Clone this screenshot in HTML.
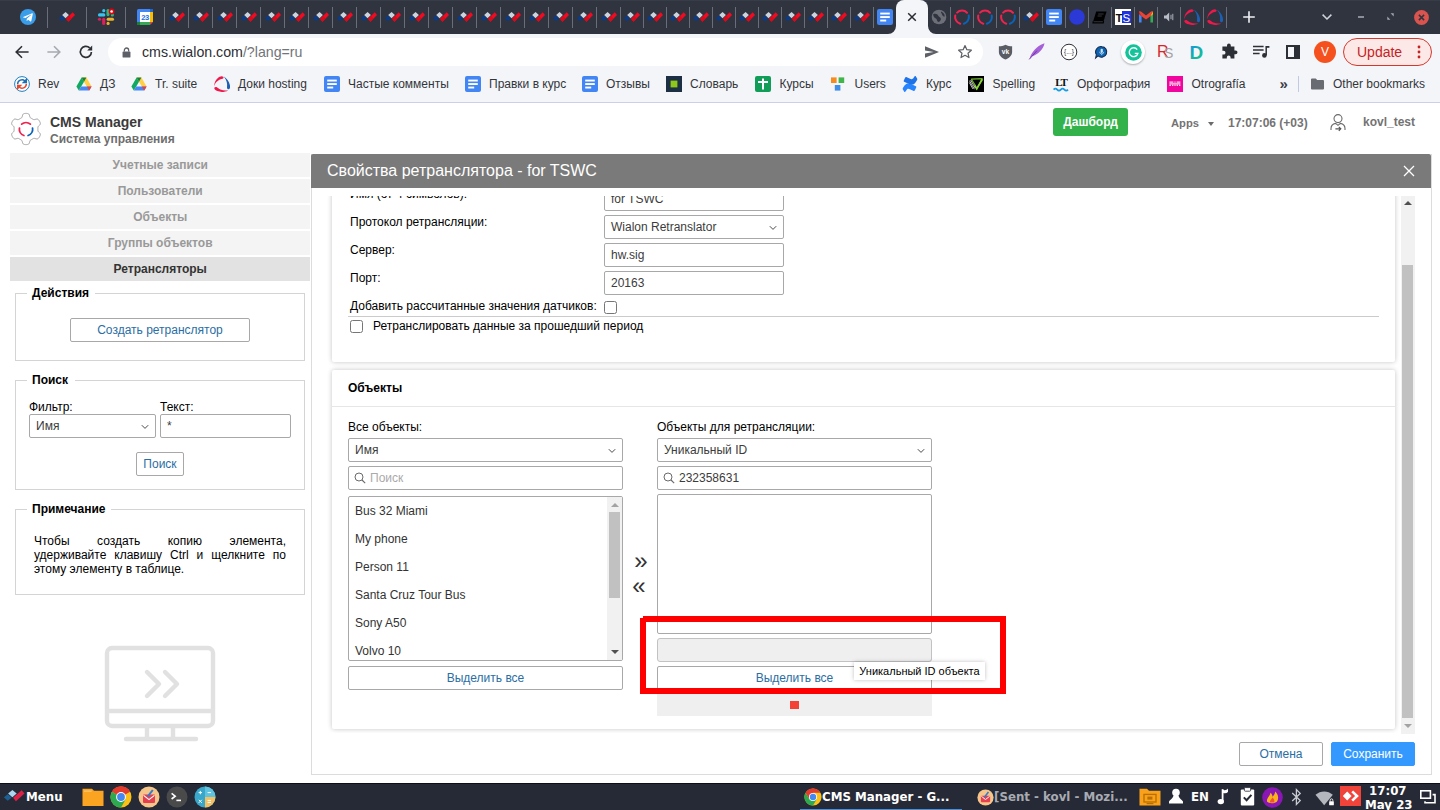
<!DOCTYPE html>
<html lang="ru">
<head>
<meta charset="utf-8">
<title>CMS Manager</title>
<style>
*{box-sizing:border-box;margin:0;padding:0}
html,body{width:1440px;height:810px;overflow:hidden;background:#fff}
body{font-family:"Liberation Sans",Arial,sans-serif;font-size:12px;color:#000;position:relative}
.abs{position:absolute}
#tabbar{position:absolute;left:0;top:0;width:1440px;height:34px;background:#30343f;box-shadow:inset 0 1px 0 #373c49}
#toolbar{position:absolute;left:0;top:34px;width:1440px;height:34px;background:#f4f5f8}
#bookbar{position:absolute;left:0;top:68px;width:1440px;height:34px;background:#f4f5f8}
#chromeline{position:absolute;left:0;top:102px;width:1440px;height:1px;background:#cbd0e8}
.tsep{position:absolute;top:7px;width:1px;height:20.5px;background:#6a6e7b}
.fav{position:absolute;top:9px;width:16px;height:16px;overflow:visible}
#acttab{position:absolute;left:896px;top:0;width:32px;height:34px;background:#f4f5f8;border-radius:8px 8px 0 0}
#omni{position:absolute;left:108px;top:38px;width:875px;height:28px;border-radius:14px;background:#fff}
#omni .url{position:absolute;left:34px;top:4px;font-size:14.2px;line-height:20px;color:#2c2e33;white-space:nowrap}
#omni .url span{color:#72757a}
.bm{position:absolute;top:76px;font-size:12px;line-height:16px;color:#33353c;white-space:nowrap}
.bmi{position:absolute;top:76px;width:16px;height:16px;overflow:visible}
#taskbar{position:absolute;left:0;top:783px;width:1440px;height:27px;background:#262a36;box-shadow:inset 0 1px 0 #0d0f18;overflow:hidden}
#taskbar .t{position:absolute;font-family:"DejaVu Sans",sans-serif;font-weight:bold;color:#fff;font-size:11.8px;line-height:15px;white-space:nowrap}
#page{position:absolute;left:0;top:0;width:1440px;height:810px}
.hb{font-weight:bold;font-size:12px;color:#737373;line-height:16px;white-space:nowrap}
.mi{position:absolute;left:10px;width:300.4px;height:24px;background:#f4f4f4;color:#999;font-weight:bold;font-size:12px;line-height:25px;text-align:center}
.mi.sel{background:#e2e2e2;color:#333}
.fs{position:absolute;left:15px;width:290px;border:1px solid #d4d4d4}
.lg{position:absolute;left:27px;height:16px;background:#fff;font-weight:bold;font-size:12px;line-height:16px;padding-left:5px;white-space:nowrap}
.btn{position:absolute;border:1px solid #a8a8a8;border-radius:2px;background:#fff;color:#2a6ea3;font-size:12px;line-height:22px;text-align:center;white-space:nowrap}
.t12{font-size:12px;line-height:14px;white-space:nowrap;color:#000}
.inp,.sel2{position:absolute;height:24px;border:1px solid #a8a8a8;border-radius:2px;background:#fff;font-size:12px;line-height:22px;padding-left:6px;color:#3c3c3c;white-space:nowrap}
.chev{position:absolute;right:6px;top:9px;width:8px;height:6px}
.mag{position:absolute;left:5px;top:5px;width:12px;height:12px}
.srch{padding-left:21px}
.cb{position:absolute;width:13px;height:13px;border:1px solid #767676;border-radius:2.5px;background:#fff}
.card{position:absolute;background:#fff;box-shadow:0 0 5px rgba(0,0,0,.24);border-radius:2px}
.lst{position:absolute;border:1px solid #a8a8a8;border-radius:2px;background:#fff;overflow:hidden}
.li{position:absolute;left:6px;height:28px;line-height:28px;font-size:12px;color:#333;white-space:nowrap}
</style>
</head>
<body>
<div id="page">
<svg class="abs" style="left:10px;top:112px" width="32" height="34" viewBox="0 0 32 34">
<path d="M27.90 17.00L27.90 16.69L27.89 16.38L27.89 16.06L27.89 15.75L27.91 15.43L27.97 15.10L28.10 14.76L28.35 14.37L28.76 13.94L29.28 13.44L29.79 12.92L30.14 12.40L30.32 11.93L30.36 11.49L30.31 11.07L30.20 10.68L30.06 10.30L29.89 9.92L29.71 9.56L29.51 9.20L29.30 8.85L29.07 8.51L28.83 8.18L28.57 7.87L28.28 7.57L27.95 7.32L27.55 7.13L27.05 7.05L26.43 7.10L25.72 7.28L25.03 7.48L24.45 7.62L23.99 7.64L23.63 7.58L23.31 7.47L23.03 7.33L22.76 7.17L22.49 7.01L22.22 6.85L21.95 6.69L21.68 6.54L21.41 6.39L21.14 6.23L20.86 6.08L20.60 5.90L20.34 5.69L20.11 5.40L19.90 4.99L19.73 4.42L19.56 3.72L19.36 3.02L19.09 2.45L18.77 2.06L18.41 1.81L18.02 1.65L17.62 1.54L17.22 1.48L16.82 1.43L16.41 1.41L16.00 1.40L15.59 1.41L15.18 1.43L14.78 1.48L14.38 1.54L13.98 1.65L13.59 1.81L13.23 2.06L12.91 2.45L12.64 3.02L12.44 3.72L12.27 4.42L12.10 4.99L11.89 5.40L11.66 5.69L11.40 5.90L11.14 6.08L10.86 6.23L10.59 6.39L10.32 6.54L10.05 6.69L9.78 6.85L9.51 7.01L9.24 7.17L8.97 7.33L8.69 7.47L8.37 7.58L8.01 7.64L7.55 7.62L6.97 7.48L6.28 7.28L5.57 7.10L4.95 7.05L4.45 7.13L4.05 7.32L3.72 7.57L3.43 7.87L3.17 8.18L2.93 8.51L2.70 8.85L2.49 9.20L2.29 9.56L2.11 9.92L1.94 10.30L1.80 10.68L1.69 11.07L1.64 11.49L1.68 11.93L1.86 12.40L2.21 12.92L2.72 13.44L3.24 13.94L3.65 14.37L3.90 14.76L4.03 15.10L4.09 15.43L4.11 15.75L4.11 16.06L4.11 16.38L4.10 16.69L4.10 17.00L4.10 17.31L4.11 17.62L4.11 17.94L4.11 18.25L4.09 18.57L4.03 18.90L3.90 19.24L3.65 19.63L3.24 20.06L2.72 20.56L2.21 21.08L1.86 21.60L1.68 22.07L1.64 22.51L1.69 22.93L1.80 23.32L1.94 23.70L2.11 24.08L2.29 24.44L2.49 24.80L2.70 25.15L2.93 25.49L3.17 25.82L3.43 26.13L3.72 26.43L4.05 26.68L4.45 26.87L4.95 26.95L5.57 26.90L6.28 26.72L6.97 26.52L7.55 26.38L8.01 26.36L8.37 26.42L8.69 26.53L8.97 26.67L9.24 26.83L9.51 26.99L9.78 27.15L10.05 27.31L10.32 27.46L10.59 27.61L10.86 27.77L11.14 27.92L11.40 28.10L11.66 28.31L11.89 28.60L12.10 29.01L12.27 29.58L12.44 30.28L12.64 30.98L12.91 31.55L13.23 31.94L13.59 32.19L13.98 32.35L14.38 32.46L14.78 32.52L15.18 32.57L15.59 32.59L16.00 32.60L16.41 32.59L16.82 32.57L17.22 32.52L17.62 32.46L18.02 32.35L18.41 32.19L18.77 31.94L19.09 31.55L19.36 30.98L19.56 30.28L19.73 29.58L19.90 29.01L20.11 28.60L20.34 28.31L20.60 28.10L20.86 27.92L21.14 27.77L21.41 27.61L21.68 27.46L21.95 27.31L22.22 27.15L22.49 26.99L22.76 26.83L23.03 26.67L23.31 26.53L23.63 26.42L23.99 26.36L24.45 26.38L25.03 26.52L25.72 26.72L26.43 26.90L27.05 26.95L27.55 26.87L27.95 26.68L28.28 26.43L28.57 26.13L28.83 25.82L29.07 25.49L29.30 25.15L29.51 24.80L29.71 24.44L29.89 24.08L30.06 23.70L30.20 23.32L30.31 22.93L30.36 22.51L30.32 22.07L30.14 21.60L29.79 21.08L29.28 20.56L28.76 20.06L28.35 19.63L28.10 19.24L27.97 18.90L27.91 18.57L27.89 18.25L27.89 17.94L27.89 17.62L27.90 17.31Z" fill="#fff" stroke="#a0a0a0" stroke-width="1" stroke-linejoin="round"/>
<g fill="none" stroke-width="1.9" stroke-linecap="round" transform="translate(16,17.2) scale(0.95)"><path d="M-4.6 -5.3A7 7 0 0 1 4.6 -5.3" stroke="#f0234f"/><path d="M-6.9 -1.2A7 7 0 0 0 -2.2 6.65" stroke="#f0234f"/><path d="M6.9 -1.2A7 7 0 0 1 2.2 6.65" stroke="#0a63b8"/></g></svg>
<div class="abs" style="left:50px;top:113px;font-size:14px;font-weight:bold;color:#3a3a3a;line-height:18px;white-space:nowrap">CMS Manager</div>
<div class="abs" style="left:50px;top:132px;font-size:12px;font-weight:bold;color:#6e6e6e;line-height:15px;white-space:nowrap">Система управления</div>
<div class="abs" style="left:1053px;top:108px;width:75px;height:28px;border-radius:3px;background:#33b14b;color:#fff;font-weight:bold;font-size:12px;line-height:28px;text-align:center">Дашборд</div>
<div class="abs hb" style="left:1171px;top:114.7px;font-size:11.2px">Apps</div>
<div class="abs" style="left:1207.5px;top:121.7px;width:0;height:0;border:3.5px solid transparent;border-top:4px solid #6b6b6b"></div>
<div class="abs hb" style="left:1228px;top:114.7px">17:07:06 (+03)</div>
<svg class="abs" style="left:1329px;top:113px" width="18" height="20" viewBox="0 0 18 20"><circle cx="9" cy="5.6" r="4" fill="none" stroke="#6a6a6a" stroke-width="1.1"/><path d="M2 17V15.6C2 12.6 4.6 10.8 6.6 10.4L9 12.4 11.4 10.4C13.6 10.8 16 12.6 16 15.6V17" fill="none" stroke="#6a6a6a" stroke-width="1.1"/><path d="M6.4 15.8H11.6M9.8 13.8 11.8 15.8 9.8 17.8" fill="none" stroke="#555" stroke-width="1.2"/></svg>
<div class="abs hb" style="left:1363px;top:113.5px">kovl_test</div>
<div class="mi" style="top:153px">Учетные записи</div>
<div class="mi" style="top:179px">Пользователи</div>
<div class="mi" style="top:205px">Объекты</div>
<div class="mi" style="top:231px">Группы объектов</div>
<div class="mi sel" style="top:257px">Ретрансляторы</div>
<div class="fs" style="top:293px;height:68px"></div>
<div class="lg" style="top:285px;width:68px">Действия</div>
<div class="btn" style="left:70px;top:318px;width:180px;height:24px">Создать ретранслятор</div>
<div class="fs" style="top:380px;height:110px"></div>
<div class="lg" style="top:372px;width:48px">Поиск</div>
<div class="abs t12" style="left:29px;top:400px">Фильтр:</div>
<div class="abs t12" style="left:160px;top:400px">Текст:</div>
<div class="sel2" style="left:29px;top:414px;width:127px">Имя<svg class="chev" viewBox="0 0 8 6"><path d="M0.8 1.2 4 4.4 7.2 1.2" fill="none" stroke="#4a4a4a" stroke-width="1"/></svg></div>
<div class="inp" style="left:160px;top:414px;width:131px">*</div>
<div class="btn" style="left:136px;top:452px;width:48px;height:24px">Поиск</div>
<div class="fs" style="top:509px;height:86px"></div>
<div class="lg" style="top:501px;width:84px">Примечание</div>
<div class="abs" style="left:34px;top:534px;width:252px;font-size:12px;line-height:14px;text-align:justify;color:#000">Чтобы создать копию элемента, удерживайте клавишу Ctrl и щелкните по этому элементу в таблице.</div>
<svg class="abs" style="left:104px;top:644.5px" width="112" height="98" viewBox="0 0 112 98"><g fill="none" stroke="#e1e1e1" stroke-width="4.4"><rect x="3" y="3" width="106" height="78" rx="5"/><path d="M3 66H109"/><path d="M43 81V92M69 81V92"/><path d="M22 94H92" stroke-linecap="round"/><path d="M43 27 55 39 43 51M61 27 73 39 61 51" stroke-linecap="round" stroke-linejoin="round"/></g></svg>
<div class="abs" style="left:310.5px;top:154px;width:1121px;height:621px;border:1px solid #dcdcdc;border-top:none;background:#fff"></div>
<div class="abs" style="left:311px;top:153.5px;width:1120px;height:34px;background:#7a7a7a;border-radius:2px 2px 0 0"></div>
<div class="abs" style="left:327px;top:161px;font-size:16px;line-height:20px;color:#fff;white-space:nowrap">Свойства ретранслятора - for TSWC</div>
<svg class="abs" style="left:1403px;top:165px" width="12" height="12" viewBox="0 0 12 12"><path d="M1 1 11 11M11 1 1 11" stroke="#fff" stroke-width="1.3" fill="none"/></svg>
<div class="abs" style="left:325px;top:196px;width:1076px;height:537px;overflow:hidden">
<div class="card" style="left:7px;top:-46px;width:1063px;height:212px"></div>
<div class="abs t12" style="left:25px;top:-9px">Имя (от 4 символов):</div>
<div class="inp" style="left:279px;top:-9px;width:180px">for TSWC</div>
<div class="abs t12" style="left:25px;top:19px">Протокол ретрансляции:</div>
<div class="sel2" style="left:279px;top:19px;width:180px">Wialon Retranslator<svg class="chev" viewBox="0 0 8 6"><path d="M0.8 1.2 4 4.4 7.2 1.2" fill="none" stroke="#4a4a4a" stroke-width="1"/></svg></div>
<div class="abs t12" style="left:25px;top:47px">Сервер:</div>
<div class="inp" style="left:279px;top:47px;width:180px">hw.sig</div>
<div class="abs t12" style="left:25px;top:75px">Порт:</div>
<div class="inp" style="left:279px;top:75px;width:180px">20163</div>
<div class="abs t12" style="left:25px;top:103px">Добавить рассчитанные значения датчиков:</div>
<div class="cb" style="left:279px;top:105px"></div>
<div class="abs" style="left:23px;top:119.60000000000002px;width:1031px;height:1px;background:#cbcbcb"></div>
<div class="cb" style="left:25px;top:124px"></div>
<div class="abs t12" style="left:48px;top:123px">Ретранслировать данные за прошедший период</div>
<div class="card" style="left:7px;top:174px;width:1063px;height:359px"></div>
<div class="abs" style="left:23px;top:184px;font-size:12px;font-weight:bold;line-height:16px">Объекты</div>
<div class="abs" style="left:7px;top:210px;width:1063px;height:1px;background:#e6e6e6"></div>
<div class="abs t12" style="left:23px;top:224px">Все объекты:</div>
<div class="abs t12" style="left:332px;top:224px">Объекты для ретрансляции:</div>
<div class="sel2" style="left:23px;top:242px;width:275px">Имя<svg class="chev" viewBox="0 0 8 6"><path d="M0.8 1.2 4 4.4 7.2 1.2" fill="none" stroke="#4a4a4a" stroke-width="1"/></svg></div>
<div class="sel2" style="left:332px;top:242px;width:275px">Уникальный ID<svg class="chev" viewBox="0 0 8 6"><path d="M0.8 1.2 4 4.4 7.2 1.2" fill="none" stroke="#4a4a4a" stroke-width="1"/></svg></div>
<div class="inp srch" style="left:23px;top:270px;width:275px;color:#aaa"><svg class="mag" viewBox="0 0 12 12"><circle cx="5" cy="5" r="4" fill="none" stroke="#6a6a6a" stroke-width="1"/><path d="M8 8 11.2 11.2" stroke="#6a6a6a" stroke-width="1.1"/></svg>Поиск</div>
<div class="inp srch" style="left:332px;top:270px;width:275px"><svg class="mag" viewBox="0 0 12 12"><circle cx="5" cy="5" r="4" fill="none" stroke="#6a6a6a" stroke-width="1"/><path d="M8 8 11.2 11.2" stroke="#6a6a6a" stroke-width="1.1"/></svg>232358631</div>
<div class="lst" style="left:23px;top:300px;width:275px;height:165px">
<div class="li" style="top:0px">Bus 32 Miami</div>
<div class="li" style="top:28px">My phone</div>
<div class="li" style="top:56px">Person 11</div>
<div class="li" style="top:84px">Santa Cruz Tour Bus</div>
<div class="li" style="top:112px">Sony A50</div>
<div class="li" style="top:140px">Volvo 10</div>
<div class="abs" style="right:0;top:0;width:15px;height:163px;background:#f1f1f1"></div>
<div class="abs" style="right:2px;top:15px;width:11px;height:86px;background:#c1c1c1"></div>
<div class="abs" style="right:3.5px;top:5.5px;width:0;height:0;border:4px solid transparent;border-top:none;border-bottom:4px solid #a3a3a3"></div>
<div class="abs" style="right:3.5px;top:153px;width:0;height:0;border:4px solid transparent;border-bottom:none;border-top:4px solid #505050"></div>
</div>
<div class="abs" style="left:309.29999999999995px;top:352px;font-size:24px;line-height:26px;color:#333">»</div>
<div class="abs" style="left:307.29999999999995px;top:376.5px;font-size:24px;line-height:26px;color:#333">«</div>
<div class="lst" style="left:332px;top:298px;width:275px;height:140px"></div>
<div class="abs" style="left:332px;top:442px;width:275px;height:24px;border:1px solid #c2c2c2;border-radius:3px;background:#efefef"></div>
<div class="btn" style="left:23px;top:470px;width:275px;height:24px">Выделить все</div>
<div class="btn" style="left:332px;top:470px;width:275px;height:24px">Выделить все</div>
<div class="abs" style="left:332px;top:498px;width:275px;height:22px;background:#efefef"></div>
<div class="abs" style="left:465px;top:505px;width:8.8px;height:8.2px;background:#f34235"></div>
<div class="abs" style="left:315.4px;top:422.4px;width:365.6px;height:75.2px;border:6px solid #fe0000;border-top:none"></div>
<div class="abs" style="left:318px;top:420px;width:363px;height:6px;background:#fe0000"></div>
<div class="abs" style="left:529px;top:466px;width:131px;height:18px;background:#fff;box-shadow:0 0 4px rgba(0,0,0,.25);font-size:11px;line-height:18px;text-align:center;white-space:nowrap">Уникальный ID объекта</div>
</div>
<div class="abs" style="left:1401px;top:196px;width:14px;height:538px;background:#f1f1f1"></div>
<div class="abs" style="left:1402px;top:265px;width:11px;height:453px;background:#c1c1c1"></div>
<div class="abs" style="left:1404px;top:201px;width:0;height:0;border:4px solid transparent;border-top:none;border-bottom:4px solid #505050"></div>
<div class="abs" style="left:1404px;top:724px;width:0;height:0;border:4px solid transparent;border-bottom:none;border-top:4px solid #a3a3a3"></div>
<div class="btn" style="left:1239px;top:742px;width:84px;height:24px">Отмена</div>
<div class="btn" style="left:1331px;top:742px;width:84px;height:24px;background:#3399ff;border-color:#3399ff;color:#fff">Сохранить</div>
</div>
<div id="taskbar">
<svg class="abs" style="left:4px;top:7px" width="20.5" height="11.6" viewBox="0 0 16 10" preserveAspectRatio="none"><polygon points="-0.1,6.4 2.95,3.6 6,6.4 2.95,9.3" fill="#1d5f92"/><polygon points="3.2,3.1 6.55,0 9.9,3.1 6.55,6.2" fill="#acd5ef"/><polygon points="7.1,6.7 13.8,0.3 16,3.1 9.3,9.8" fill="#dc2147"/></svg>
<div class="t" style="left:26px;top:7px">Menu</div>
<svg class="abs" style="left:82px;top:4.5px" width="22" height="19" viewBox="0 0 22 19"><path d="M0.5 0.8H10L12 2.8H21.5V18H0.5Z" fill="#fba421"/><path d="M2 2.6H9.6V3.6H2Z" fill="#ffd08a"/></svg>
<svg class="abs" style="left:110px;top:3px" width="22" height="22" viewBox="0 0 22 22"><circle cx="11" cy="11" r="10.5" fill="#fbc116"/><path d="M11 11 1.9 5.75A10.5 10.5 0 0 1 20.1 5.75Z" fill="#e33b2e"/><path d="M11 11 1.9 5.75A10.5 10.5 0 0 0 11 21.5L15.5 13.6Z" fill="#2da94f"/><path d="M1.9 5.75A10.5 10.5 0 0 1 20.1 5.75H11Z" fill="#e33b2e"/><circle cx="11" cy="11" r="4.9" fill="#fff"/><circle cx="11" cy="11" r="3.9" fill="#4688f1"/></svg>
<svg class="abs" style="left:138px;top:3px" width="22" height="22" viewBox="0 0 22 22"><circle cx="11" cy="11" r="10.5" fill="#f5c58a"/><rect x="5" y="8.6" width="12" height="8.4" rx="1" fill="#e5404f"/><path d="M5.6 9.4 11 13.6 16.4 9.4" stroke="#fff" stroke-width="1.2" fill="none"/><path d="M9.6 10.6 14.8 4" stroke="#2f7dd1" stroke-width="2"/></svg>
<svg class="abs" style="left:166px;top:3px" width="22" height="22" viewBox="0 0 22 22"><circle cx="11" cy="11" r="10.5" fill="#4a4a4a"/><path d="M5.6 7.4 9.2 10.2 5.6 13" stroke="#fff" stroke-width="1.6" fill="none"/><path d="M10.4 14.4H15" stroke="#fff" stroke-width="1.6"/></svg>
<svg class="abs" style="left:194px;top:3px" width="22" height="22" viewBox="0 0 22 22"><circle cx="11" cy="11" r="10.5" fill="#38a7c9"/><path d="M11 11H21.5A10.5 10.5 0 0 1 11 21.5Z" fill="#f3c063"/><path d="M11 0.5A10.5 10.5 0 0 1 21.5 11H11Z" fill="#5fc3e0"/><path d="M4.6 6.6H8M6.3 4.9V8.3M13.6 6.6H17M4.8 13.8 7.8 16.8M7.8 13.8 4.8 16.8M13.6 14.4H17M13.6 16.4H17" stroke="#fff" stroke-width="1" fill="none"/></svg>
<svg class="abs" style="left:804px;top:5px" width="18" height="18" viewBox="0 0 22 22"><circle cx="11" cy="11" r="10.5" fill="#fbc116"/><path d="M1.9 5.75A10.5 10.5 0 0 1 20.1 5.75H11L6.5 13.6Z" fill="#e33b2e"/><path d="M1.9 5.75A10.5 10.5 0 0 0 11 21.5L15.5 13.6H6.5Z" fill="#2da94f"/><circle cx="11" cy="11" r="4.9" fill="#fff"/><circle cx="11" cy="11" r="3.9" fill="#4688f1"/></svg>
<div class="t" style="left:822px;top:7px">CMS Manager - G...</div>
<div class="abs" style="left:800px;top:26px;width:162px;height:2px;background:#4a90d9"></div>
<svg class="abs" style="left:977px;top:6px" width="17" height="17" viewBox="0 0 22 22"><circle cx="11" cy="11" r="10.5" fill="#f5c58a"/><rect x="5" y="8.6" width="12" height="8.4" rx="1" fill="#e5404f"/><path d="M5.6 9.4 11 13.6 16.4 9.4" stroke="#fff" stroke-width="1.2" fill="none"/><path d="M9.6 10.6 14.8 4" stroke="#2f7dd1" stroke-width="2"/></svg>
<div class="t" style="left:994px;top:7px;color:#a9abb2">[Sent - kovl - Mozi...</div>
<svg class="abs" style="left:1139px;top:5px" width="22" height="18" viewBox="0 0 22 18"><path d="M0.5 0.8H8L10 2.8H21.5V17.5H0.5Z" fill="#f9a11b"/><rect x="5" y="6.4" width="12" height="7.6" fill="none" stroke="#b86f00" stroke-width="1.3"/><rect x="8.4" y="8.6" width="5" height="3" fill="#b86f00"/><path d="M7.6 15.6H14.4" stroke="#b86f00" stroke-width="1.2"/></svg>
<svg class="abs" style="left:1168px;top:5px" width="16" height="17" viewBox="0 0 16 17"><circle cx="8" cy="4.6" r="3.8" fill="#fff"/><path d="M5.4 7.6H10.6C10.8 10.4 13.6 11.6 15 13.6V15.6H1V13.6C2.4 11.6 5.2 10.4 5.4 7.6Z" fill="#fff"/></svg>
<div class="t" style="left:1191px;top:7px">EN</div>
<svg class="abs" style="left:1217px;top:5px" width="12" height="18" viewBox="0 0 12 18"><path d="M5.6 1.2V13" stroke="#fff" stroke-width="1.8"/><path d="M5.6 1.2C7 3 9.6 2.2 11 0.6V4C9.4 5.6 7 5.6 5.6 4.4Z" fill="#fff"/><ellipse cx="3.8" cy="13.6" rx="3.2" ry="2.6" fill="#fff"/></svg>
<svg class="abs" style="left:1240px;top:4px" width="15" height="19" viewBox="0 0 15 19"><rect x="0.8" y="2.4" width="13.4" height="16" rx="1" fill="#fff"/><rect x="4.4" y="0.6" width="6.2" height="3.6" rx="0.8" fill="#fff" stroke="#262a36" stroke-width="0.8"/><path d="M3.8 10.4 6.6 13.2 11.4 7.8" stroke="#262a36" stroke-width="2" fill="none"/></svg>
<svg class="abs" style="left:1261.5px;top:3.5px" width="21" height="21" viewBox="0 0 21 21"><circle cx="10.5" cy="10.5" r="10.3" fill="#8a17b5"/><path d="M5 14.6C4.6 10.6 8 9.4 8.4 5.8 10 7 10.6 8.6 10.4 9.8 12 8.4 13.2 6.6 13 4.6 16 7 17.2 11 15 14.4 13 16.6 7.2 17 5 14.6Z" fill="#f9b41c"/><path d="M8 15.4C7.6 13 9.8 12.4 10.4 10.4 12.2 12 13 13.8 12 15.6Z" fill="#f2562f"/></svg>
<svg class="abs" style="left:1291px;top:5px" width="11" height="18" viewBox="0 0 11 18"><path d="M1.2 5 9.2 12.6 5.4 16.4V1.6L9.2 5.4 1.2 13" stroke="#c9ccd3" stroke-width="1.3" fill="none"/></svg>
<svg class="abs" style="left:1315px;top:8px" width="20" height="15" viewBox="0 0 24 18"><path d="M0.6 4.6C6.6 -0.8 15.4 -0.8 21.4 4.6L11 17Z" fill="#b4b7be"/><path d="M13 17 21.4 7 21.4 17Z" fill="#262a36"/><rect x="17" y="12.4" width="5.6" height="4.6" rx="0.6" fill="#fff"/><path d="M18.2 12.4V11A1.6 1.6 0 0 1 21.4 11V12.4" stroke="#fff" stroke-width="1" fill="none"/></svg>
<div class="abs" style="left:1340px;top:3px;width:20.5px;height:19.5px;background:#f0433a"></div>
<svg class="abs" style="left:1342px;top:7px" width="18" height="12" viewBox="0 0 18 12"><polygon points="0.8,6 5.2,1.6 9.6,6 5.2,10.4" fill="#fff"/><path d="M10.2 1.4 15 6 10.2 10.6" stroke="#fff" stroke-width="2.6" fill="none"/></svg>
<div class="t" style="left:1369px;top:1px">17:07</div>
<div class="t" style="left:1365px;top:15px">May 23</div>
<svg class="abs" style="left:1420px;top:7px" width="16" height="14" viewBox="0 0 16 14"><rect x="0.8" y="0.8" width="9.6" height="7.4" fill="none" stroke="#fff" stroke-width="1.6"/><path d="M5 11.2V12.8H15V4.6H12.6" fill="none" stroke="#fff" stroke-width="1.6"/></svg>
</div>
<svg width="0" height="0" style="position:absolute"><defs>
<symbol id="wl" viewBox="0 0 16 16"><polygon points="-0.1,9.4 2.95,6.6 6,9.4 2.95,12.3" fill="#0b3b85"/><polygon points="3.2,6.1 6.55,3 9.9,6.1 6.55,9.2" fill="#cbd3de"/><polygon points="7.1,9.7 13.8,3.3 16,6.1 9.3,12.8" fill="#f40a20"/><polygon points="7.1,9.7 10.2,6.7 12.5,9.6 9.3,12.8" fill="#d90a1c"/></symbol>
<symbol id="docs" viewBox="0 0 16 16"><rect width="16" height="16" rx="2" fill="#4285f4"/><rect x="3.2" y="3.6" width="9.6" height="1.9" fill="#fff"/><rect x="3.2" y="7.1" width="9.6" height="1.9" fill="#fff"/><rect x="3.2" y="10.6" width="6" height="1.9" fill="#fff"/></symbol>
<symbol id="ring" viewBox="0 0 16 16"><g fill="none" stroke-width="2" stroke-linecap="round"><path d="M3.1 3.6A7 7 0 0 1 13 3.7" stroke="#f0234f"/><path d="M1.3 6.4A7 7 0 0 0 6.2 14.7" stroke="#f0234f"/><path d="M14.7 6.5A7 7 0 0 1 9.9 14.7" stroke="#0a63b8"/></g></symbol>
<symbol id="swirl" viewBox="0 0 16 16"><path d="M9.4 1.2C8.6 -0.4 5.6 0.2 3.4 2.4C1.2 4.6 0.1 7.4 0.3 9.9C1.2 7 2.4 5.6 4.3 4.4C5.8 3.4 7.4 2.9 8.6 2.7C9.6 2.5 9.9 1.9 9.4 1.2Z" fill="#f0174b"/><path d="M0.5 11.6C-0.2 12.6 1.2 14.2 3.4 15.1C6.8 16.4 11 16 14.2 14.4C11.2 14.8 8.6 14.4 6.4 13.5C4.8 12.8 3.8 11.9 2.9 11.3C1.9 10.7 1 10.9 0.5 11.6Z" fill="#f0174b"/><path d="M14.6 13.2C16 13.2 16.4 11.4 15.8 8.8C15 5.4 12.8 2 9.5 0.2C11.6 2.6 12.6 4.8 13 7.4C13.2 9 13 10.2 13 11.4C13 12.4 13.6 13.2 14.6 13.2Z" fill="#1c5fb4"/></symbol>
<symbol id="drive" viewBox="0 0 16 16"><polygon points="5.6,1.6 10.4,1.6 15.6,10.6 10.8,10.6" fill="#ffcf48"/><polygon points="5.6,1.6 8,5.8 2.8,14.6 0.4,10.6" fill="#11a861"/><polygon points="5.2,10.6 15.6,10.6 13.2,14.6 2.8,14.6" fill="#4688f4"/><polygon points="10.8,10.6 15.6,10.6 13.2,14.6" fill="#e94235"/><polygon points="5.6,1.6 10.4,1.6 8,5.8" fill="#188038"/></symbol>
</defs></svg>
<div id="tabbar">
<i class="tsep" style="left:47.0px"></i>
<i class="tsep" style="left:86.0px"></i>
<i class="tsep" style="left:125.0px"></i>
<i class="tsep" style="left:164.0px"></i>
<i class="tsep" style="left:188.0px"></i>
<i class="tsep" style="left:212.0px"></i>
<i class="tsep" style="left:236.0px"></i>
<i class="tsep" style="left:260.0px"></i>
<i class="tsep" style="left:284.0px"></i>
<i class="tsep" style="left:308.0px"></i>
<i class="tsep" style="left:332.0px"></i>
<i class="tsep" style="left:356.0px"></i>
<i class="tsep" style="left:380.0px"></i>
<i class="tsep" style="left:404.0px"></i>
<i class="tsep" style="left:428.0px"></i>
<i class="tsep" style="left:452.0px"></i>
<i class="tsep" style="left:476.0px"></i>
<i class="tsep" style="left:500.0px"></i>
<i class="tsep" style="left:524.0px"></i>
<i class="tsep" style="left:548.0px"></i>
<i class="tsep" style="left:572.0px"></i>
<i class="tsep" style="left:596.0px"></i>
<i class="tsep" style="left:620.0px"></i>
<i class="tsep" style="left:643.0px"></i>
<i class="tsep" style="left:666.0px"></i>
<i class="tsep" style="left:689.0px"></i>
<i class="tsep" style="left:712.0px"></i>
<i class="tsep" style="left:735.0px"></i>
<i class="tsep" style="left:758.0px"></i>
<i class="tsep" style="left:781.0px"></i>
<i class="tsep" style="left:804.0px"></i>
<i class="tsep" style="left:827.0px"></i>
<i class="tsep" style="left:850.0px"></i>
<i class="tsep" style="left:873.0px"></i>
<i class="tsep" style="left:950.0px"></i>
<i class="tsep" style="left:973.0px"></i>
<i class="tsep" style="left:996.0px"></i>
<i class="tsep" style="left:1019.0px"></i>
<i class="tsep" style="left:1042.0px"></i>
<i class="tsep" style="left:1065.0px"></i>
<i class="tsep" style="left:1088.0px"></i>
<i class="tsep" style="left:1111.0px"></i>
<i class="tsep" style="left:1134.0px"></i>
<i class="tsep" style="left:1157.0px"></i>
<i class="tsep" style="left:1180.0px"></i>
<i class="tsep" style="left:1203.0px"></i>
<i class="tsep" style="left:1226.0px"></i>
<svg class="fav" style="left:20px" viewBox="0 0 16 16"><circle cx="8" cy="8" r="8" fill="#3a9dea"/><path d="M3.2 7.9 12.2 4.2c.4-.15.75.1.62.7L11.3 12c-.1.5-.42.6-.84.38L8.2 10.7 7.1 11.8c-.13.13-.23.23-.46.23l.17-2.3 4.2-3.8c.18-.16-.04-.25-.28-.1L5.5 9.1 3.3 8.4c-.5-.15-.5-.48-.1-.5z" fill="#fff"/></svg>
<svg class="fav" style="left:59px"><use href="#wl"/></svg>
<svg class="fav" style="left:98px" viewBox="0 0 16 16"><g stroke-linecap="round" stroke-width="3.1" fill="none">
<path d="M1.5 5.9H5.8" stroke="#36c5f0"/><path d="M5.8 1.6V1.7" stroke="#36c5f0"/>
<path d="M10 1.6V5.6" stroke="#2eb67d"/><path d="M14.3 5.9H14.4" stroke="#2eb67d"/>
<path d="M10.2 10.2H14.5" stroke="#ecb22e"/><path d="M10.1 14.4V14.5" stroke="#ecb22e"/>
<path d="M5.7 10.4V14.5" stroke="#e01e5a"/><path d="M1.5 10.3H1.6" stroke="#e01e5a"/></g>
<circle cx="13.6" cy="2.5" r="2.9" fill="#e8000b"/><circle cx="13.6" cy="2.5" r="1.3" fill="#fff"/></svg>
<svg class="fav" style="left:137px" viewBox="0 0 16 16"><rect x="0" y="0" width="16" height="16" rx="1.5" fill="#4285f4"/><rect x="13" y="0" width="3" height="3" fill="#1967d2"/><rect x="13" y="3" width="3" height="10" fill="#fbbc04"/><rect x="0" y="13" width="13" height="3" fill="#34a853"/><rect x="0" y="13" width="3" height="3" fill="#188038"/><polygon points="13,13 16,13 13,16" fill="#ea4335"/><polygon points="16,13 16,16 13,16" fill="#30343f"/><rect x="3" y="3" width="10" height="10" fill="#fff"/><text x="8" y="11" font-size="7.6" font-weight="bold" fill="#1a73e8" text-anchor="middle" font-family="Liberation Sans,sans-serif" letter-spacing="-0.4">23</text></svg>
<svg class="fav" style="left:168.5px"><use href="#wl"/></svg>
<svg class="fav" style="left:192.5px"><use href="#wl"/></svg>
<svg class="fav" style="left:216.5px"><use href="#wl"/></svg>
<svg class="fav" style="left:240.5px"><use href="#wl"/></svg>
<svg class="fav" style="left:264.5px"><use href="#wl"/></svg>
<svg class="fav" style="left:288.5px"><use href="#wl"/></svg>
<svg class="fav" style="left:312.5px"><use href="#wl"/></svg>
<svg class="fav" style="left:336.5px"><use href="#wl"/></svg>
<svg class="fav" style="left:360.5px"><use href="#wl"/></svg>
<svg class="fav" style="left:384.5px"><use href="#wl"/></svg>
<svg class="fav" style="left:408.5px"><use href="#wl"/></svg>
<svg class="fav" style="left:432.5px"><use href="#wl"/></svg>
<svg class="fav" style="left:456.5px"><use href="#wl"/></svg>
<svg class="fav" style="left:480.5px"><use href="#wl"/></svg>
<svg class="fav" style="left:504.5px"><use href="#wl"/></svg>
<svg class="fav" style="left:528.5px"><use href="#wl"/></svg>
<svg class="fav" style="left:552.5px"><use href="#wl"/></svg>
<svg class="fav" style="left:576.5px"><use href="#wl"/></svg>
<svg class="fav" style="left:600.5px"><use href="#wl"/></svg>
<svg class="fav" style="left:624.0px"><use href="#wl"/></svg>
<svg class="fav" style="left:647.0px"><use href="#wl"/></svg>
<svg class="fav" style="left:670.0px"><use href="#wl"/></svg>
<svg class="fav" style="left:693.0px"><use href="#wl"/></svg>
<svg class="fav" style="left:716.0px"><use href="#wl"/></svg>
<svg class="fav" style="left:739.0px"><use href="#wl"/></svg>
<svg class="fav" style="left:762.0px"><use href="#wl"/></svg>
<svg class="fav" style="left:785.0px"><use href="#wl"/></svg>
<svg class="fav" style="left:808.0px"><use href="#wl"/></svg>
<svg class="fav" style="left:831.0px"><use href="#wl"/></svg>
<svg class="fav" style="left:854.0px"><use href="#wl"/></svg>
<svg class="fav" style="left:877px"><use href="#docs"/></svg>
<div id="acttab"></div>
<svg class="abs" style="left:888px;top:26px" width="8" height="8" viewBox="0 0 8 8"><path d="M0 8H8V0A8 8 0 0 1 0 8Z" fill="#f4f5f8"/></svg>
<svg class="abs" style="left:928px;top:26px" width="8" height="8" viewBox="0 0 8 8"><path d="M8 8H0V0A8 8 0 0 0 8 8Z" fill="#f4f5f8"/></svg>
<svg class="abs" style="left:907px;top:12px" width="10" height="10" viewBox="0 0 10 10"><path d="M1.2 1.2 8.8 8.8M8.8 1.2 1.2 8.8" stroke="#2a2c33" stroke-width="1.5" fill="none"/></svg>
<svg class="fav" style="left:931.0px" viewBox="0 0 16 16"><circle cx="8" cy="8" r="7.3" fill="#6c6f78"/><path d="M2.2 5.2C4.5 4.2 6.6 5 7.3 6.8 7.8 8.2 9.2 8 9.8 9.4 10.3 10.7 9.2 12.4 7.4 13 5.5 12.3 6.3 10.4 5 9.6 3.6 8.8 2 7.4 2.2 5.2ZM10 2.6C12 3.2 13.6 5 13.8 7.4 12.6 7.6 11.4 6.8 11 5.4 10.7 4.4 9.6 3.6 10 2.6Z" fill="#30343f"/></svg>
<svg class="fav" style="left:954.0px"><use href="#ring"/></svg>
<svg class="fav" style="left:977.0px"><use href="#ring"/></svg>
<svg class="fav" style="left:1000.0px"><use href="#ring"/></svg>
<svg class="fav" style="left:1023.0px"><use href="#wl"/></svg>
<svg class="fav" style="left:1046.0px"><use href="#docs"/></svg>
<svg class="fav" style="left:1069.0px" viewBox="0 0 16 16"><circle cx="8" cy="8" r="7.8" fill="#2b39d6"/></svg>
<svg class="fav" style="left:1092.0px" viewBox="0 0 16 16"><path d="M4.2 2.5H14.6L11.6 12.2H1.2Z" fill="#000"/><path d="M1.2 12.2 1 13.9H11.2L11.6 12.2" fill="none" stroke="#000" stroke-width="1.2"/><path d="M6.2 5H11.6M5.6 7H9.8" stroke="#3a3d48" stroke-width="0.9"/></svg>
<svg class="fav" style="left:1115.0px" viewBox="0 0 16 16"><rect width="16" height="16" fill="#fff"/><rect x="7" y="2" width="9" height="12" fill="#1d34e0"/><text x="0.6" y="13" font-size="11.5" font-weight="bold" fill="#111" font-family="Liberation Sans,sans-serif">T</text><text x="7.6" y="13" font-size="11.5" fill="#fff" font-family="Liberation Sans,sans-serif">S</text></svg>
<svg class="fav" style="left:1138.0px" viewBox="0 0 16 16"><path d="M1 4.2V13.4H3.6V7L1 4.2Z" fill="#4285f4"/><path d="M15 4.2V13.4H12.4V7L15 4.2Z" fill="#34a853"/><path d="M12.4 3.6 15 2.6V5.2L12.4 7.3Z" fill="#fbbc04"/><path d="M1 2.6 3.6 3.6V7.3L1 5.2Z" fill="#c5221f"/><path d="M1 2.6C1.8 2 2.8 2.2 3.6 2.9L8 6.4 12.4 2.9C13.2 2.2 14.2 2 15 2.6L12.4 7.3 8 10.4 3.6 7.3Z" fill="#ea4335"/></svg>
<svg class="fav" style="left:1161.0px" viewBox="0 0 16 16"><path d="M3 6.4H5.2L8.2 3.6V12.4L5.2 9.6H3Z" fill="#b9bec8"/><path d="M10 5.8V10.2M11.8 4.8V11.2" stroke="#b9bec8" stroke-width="0.9" fill="none"/></svg>
<svg class="fav" style="left:1184.0px"><use href="#swirl"/></svg>
<svg class="fav" style="left:1207.0px"><use href="#swirl"/></svg>
<svg class="abs" style="left:1242px;top:10px" width="14" height="14" viewBox="0 0 14 14"><path d="M7 1.2V12.8M1.2 7H12.8" stroke="#eef0f4" stroke-width="1.6" fill="none"/></svg>
<svg class="abs" style="left:1321px;top:11px" width="12" height="12" viewBox="0 0 12 12"><path d="M1.6 3.6 6 8 10.4 3.6" stroke="#d0d3da" stroke-width="1.5" fill="none"/></svg>
<div class="abs" style="left:1358px;top:16px;width:6px;height:2px;background:#8b8e98"></div>
<svg class="abs" style="left:1386px;top:12px" width="9" height="9" viewBox="0 0 9 9"><path d="M1.3 4.6V7.7H4.4ZM4.6 1.3H7.7V4.4Z" fill="#a3a6af"/></svg>
<svg class="abs" style="left:1413.5px;top:9.5px" width="15" height="15" viewBox="0 0 15 15"><circle cx="7.5" cy="7.5" r="7.4" fill="#d9534f"/><path d="M4.9 4.9 10.1 10.1M10.1 4.9 4.9 10.1" stroke="#30343f" stroke-width="1.5" fill="none"/></svg>
</div>
<div id="toolbar"></div>
<svg class="abs" style="left:14px;top:44px" width="16" height="16" viewBox="0 0 16 16"><path d="M14.6 8H2.4M8 2.2 2.2 8 8 13.8" stroke="#2d2f36" stroke-width="1.6" fill="none"/></svg>
<svg class="abs" style="left:46px;top:44px" width="16" height="16" viewBox="0 0 16 16"><path d="M1.4 8H13.6M8 2.2 13.8 8 8 13.8" stroke="#a6a9b0" stroke-width="1.6" fill="none"/></svg>
<svg class="abs" style="left:78px;top:44px" width="16" height="16" viewBox="0 0 16 16"><path d="M13.4 7.9A5.5 5.5 0 1 1 11.7 3.9" stroke="#2d2f36" stroke-width="1.7" fill="none"/><path d="M14.2 1.4V6.4H9.2Z" fill="#2d2f36"/></svg>
<div id="omni"><svg class="abs" style="left:13.5px;top:8.5px" width="9" height="11" viewBox="0 0 10 12"><rect x="0.6" y="5" width="8.8" height="6.6" rx="1" fill="#5d6066"/><path d="M2.6 5V3.4A2.4 2.4 0 0 1 7.4 3.4V5" stroke="#5d6066" stroke-width="1.4" fill="none"/></svg><div class="url">cms.wialon.com<span>/?lang=ru</span></div>
<svg class="abs" style="left:816px;top:7px" width="16" height="14" viewBox="0 0 16 14"><path d="M1 1.2 15 7 1 12.8 1 8.4 9.6 7 1 5.6Z" fill="#5d6066"/></svg>
<svg class="abs" style="left:849px;top:6px" width="16" height="15" viewBox="0 0 18 17"><path d="M9 1.8 11.1 6.5 16.2 7 12.4 10.4 13.5 15.4 9 12.8 4.5 15.4 5.6 10.4 1.8 7 6.9 6.5Z" stroke="#5d6066" stroke-width="1.4" fill="none" stroke-linejoin="round"/></svg></div>
<svg class="abs" style="left:998px;top:44px" width="15" height="16" viewBox="0 0 17 18"><path d="M8.5 0.8C6 2.2 3.6 2.6 1 2.6V9C1 13 4.4 16 8.5 17.4 12.6 16 16 13 16 9V2.6C13.4 2.6 11 2.2 8.5 0.8Z" fill="#5a5d64"/><text x="8.5" y="11.2" font-size="7.5" font-weight="bold" fill="#fff" text-anchor="middle" font-family="Liberation Sans,sans-serif">vk</text></svg>
<svg class="abs" style="left:1028px;top:42px" width="18" height="18" viewBox="0 0 18 18"><path d="M1.5 17C3 11 8 4 16.5 1.2 15.5 7 10 12.5 4 14.2Z" fill="#a561d8"/><path d="M1.2 17.4 9 8.6" stroke="#6d2fa8" stroke-width="0.9"/></svg>
<svg class="abs" style="left:1060px;top:43px" width="18" height="18" viewBox="0 0 18 18"><circle cx="9" cy="9" r="7.8" fill="#fff" stroke="#2d2f36" stroke-width="1"/><text x="9" y="11.4" font-size="6.5" fill="#2d2f36" text-anchor="middle" font-family="Liberation Sans,sans-serif">{...}</text></svg>
<svg class="abs" style="left:1094px;top:45px" width="14.5" height="14.5" viewBox="0 0 18 18"><path d="M9.6 2A6.6 6.6 0 1 1 5 13.6L2 16.2 3 12A6.6 6.6 0 0 1 9.6 2Z" fill="#0d63b0" stroke="#142b4e" stroke-width="1.3"/><rect x="8.2" y="4.6" width="2.8" height="5.2" rx="1.4" fill="#cfe4f7"/><path d="M7 8.4A2.6 2.6 0 0 0 12.2 8.4M9.6 11V12.6" stroke="#cfe4f7" stroke-width="0.9" fill="none"/></svg>
<div class="abs" style="left:1121px;top:40px;width:24px;height:24px;border-radius:12px;background:#fff;box-shadow:0 1px 2px rgba(0,0,0,.3)"></div>
<svg class="abs" style="left:1124.5px;top:43.5px" width="17" height="17" viewBox="0 0 17 17"><circle cx="8.5" cy="8.5" r="8.3" fill="#15c39a"/><path d="M12.2 5.6A4.4 4.4 0 1 0 12.9 9.4H9.8" stroke="#fff" stroke-width="1.4" fill="none"/></svg>
<div class="abs" style="left:1157px;top:41px;font-size:16px;color:#d9252a;letter-spacing:-2px;line-height:22px">R<span style="color:#a4a4a4;font-size:14px;position:relative;left:-2.5px;top:1px">S</span></div>
<svg class="abs" style="left:1189px;top:43px" width="17" height="18" viewBox="0 0 17 18"><defs><linearGradient id="dg" x1="0" y1="0" x2="0.6" y2="1"><stop offset="0" stop-color="#1a8fe8"/><stop offset="1" stop-color="#10c48a"/></linearGradient></defs><text x="0.6" y="15.6" font-size="19" font-weight="bold" fill="url(#dg)" font-family="Liberation Sans,sans-serif">D</text></svg>
<svg class="abs" style="left:1220px;top:43px" width="18" height="18" viewBox="0 0 18 18"><path d="M7 2.4A1.9 1.9 0 0 1 10.8 2.4V3.6H14.4V7.4H15.6A1.9 1.9 0 0 1 15.6 11.2H14.4V15.6H10.6V14.4A1.9 1.9 0 0 0 6.8 14.4V15.6H2.4V11.6H3.6A1.9 1.9 0 0 0 3.6 7.8H2.4V3.6H7Z" fill="#2d2f36"/></svg>
<svg class="abs" style="left:1252px;top:44px" width="18" height="16" viewBox="0 0 18 16"><path d="M1 2.4H11.6M1 6H11.6M1 9.6H7.6" stroke="#2d2f36" stroke-width="1.5"/><path d="M14.2 2V11.2" stroke="#2d2f36" stroke-width="1.5"/><path d="M14.2 2H17.4V3.8H14.2Z" fill="#2d2f36"/><circle cx="12.4" cy="11.4" r="2.3" fill="#2d2f36"/></svg>
<div class="abs" style="left:1286px;top:45px;width:14px;height:14px;border:2px solid #2d2f36;border-right-width:6px"></div>
<div class="abs" style="left:1314px;top:41px;width:22px;height:22px;border-radius:11px;background:#f4511e;color:#fff;font-size:12px;line-height:22px;text-align:center">V</div>
<div class="abs" style="left:1343px;top:38px;width:89px;height:28px;border-radius:14px;background:#fce8e6;border:1px solid #d5372d"></div>
<div class="abs" style="left:1357px;top:42px;font-size:14px;line-height:20px;color:#c5221f">Update</div>
<svg class="abs" style="left:1417px;top:45px" width="4" height="14" viewBox="0 0 4 14"><circle cx="2" cy="2" r="1.4" fill="#c5221f"/><circle cx="2" cy="7" r="1.4" fill="#c5221f"/><circle cx="2" cy="12" r="1.4" fill="#c5221f"/></svg>
<div id="bookbar"></div>
<svg class="bmi" style="left:14px" viewBox="0 0 16 16"><circle cx="8" cy="8" r="7.4" fill="#fff" stroke="#1f7fc1" stroke-width="1"/><path d="M3.6 8.2A4.4 4.4 0 0 1 11 5M12.3 3.6V6.4H9.5Z" stroke="#1b6fb5" stroke-width="1.5" fill="none"/><path d="M12.4 7.8A4.4 4.4 0 0 1 5 11M3.7 12.4V9.6H6.5Z" stroke="#e2472c" stroke-width="1.5" fill="none"/></svg>
<div class="bm" style="left:38px">Rev</div>
<svg class="bmi" style="left:75.5px"><use href="#drive"/></svg>
<div class="bm" style="left:100px">ДЗ</div>
<svg class="bmi" style="left:131px"><use href="#drive"/></svg>
<div class="bm" style="left:155px">Tr. suite</div>
<svg class="bmi" style="left:213.5px"><use href="#swirl"/></svg>
<div class="bm" style="left:238px">Доки hosting</div>
<svg class="bmi" style="left:324px"><use href="#docs"/></svg>
<div class="bm" style="left:348px">Частые комменты</div>
<svg class="bmi" style="left:465px"><use href="#docs"/></svg>
<div class="bm" style="left:489px">Правки в курс</div>
<svg class="bmi" style="left:582px"><use href="#docs"/></svg>
<div class="bm" style="left:606px">Отзывы</div>
<svg class="bmi" style="left:666px" viewBox="0 0 16 16"><rect width="16" height="16" fill="#1d2f42"/><rect x="4.6" y="4.6" width="6.8" height="6.8" fill="#8dc71a"/></svg>
<div class="bm" style="left:690px">Словарь</div>
<svg class="bmi" style="left:755px" viewBox="0 0 16 16"><rect width="16" height="16" rx="2" fill="#0f9d58"/><path d="M8 2.6V13.4M3 6H13" stroke="#fff" stroke-width="2"/></svg>
<div class="bm" style="left:779.5px">Курсы</div>
<svg class="bmi" style="left:830px" viewBox="0 0 16 16"><rect x="1" y="1.4" width="5.6" height="5.6" fill="#f68b1f"/><rect x="8.6" y="1.4" width="5.6" height="5.6" fill="#3fb54a"/><rect x="4.8" y="9" width="5.6" height="5.6" fill="#3f8fe8"/></svg>
<div class="bm" style="left:854.5px">Users</div>
<svg class="bmi" style="left:901.5px" viewBox="0 0 16 16"><path d="M0.9 12.1C1.4 11.2 2 10.2 2.5 9.5C4.6 6.4 7.4 7.2 10.6 8.7L13.9 10.2C14.3 10.4 14.5 10.9 14.3 11.3L12.8 14.6C12.6 15 12.1 15.2 11.7 15L8.4 13.5C6.6 12.6 5.6 12.3 4.4 14.2L3.5 15.6C3.3 16 2.8 16.1 2.4 15.9L0.9 13.4C0.6 13 0.6 12.5 0.9 12.1Z" fill="#2684ff"/><path d="M15.1 3.9C14.6 4.8 14 5.8 13.5 6.5C11.4 9.6 8.6 8.8 5.4 7.3L2.1 5.8C1.7 5.6 1.5 5.1 1.7 4.7L3.2 1.4C3.4 1 3.9 0.8 4.3 1L7.6 2.5C9.4 3.4 10.4 3.7 11.6 1.8L12.5 0.4C12.7 0 13.2 -0.1 13.6 0.1L15.1 2.6C15.4 3 15.4 3.5 15.1 3.9Z" fill="#1f73e8"/></svg>
<div class="bm" style="left:926px">Курс</div>
<svg class="bmi" style="left:968px" viewBox="0 0 16 16"><rect width="16" height="16" fill="#000"/><path d="M3.4 3.2 14.2 2.6 8.6 13.6 7.4 9.6Z" stroke="#6db52b" stroke-width="1.2" fill="none" stroke-linejoin="round"/><path d="M6.6 9.4 8.8 12.4 14.4 3.2" stroke="#8ad33a" stroke-width="1.7" fill="none"/><path d="M1.4 4.6 6.4 13.2M2.6 4 7.2 12M1.2 6.4 5 13" stroke="#cfcfcf" stroke-width="0.9" fill="none"/></svg>
<div class="bm" style="left:992.5px">Spelling</div>
<svg class="bmi" style="left:1053px" viewBox="0 0 16 16"><text x="8" y="9.6" font-size="11" font-weight="bold" fill="#111" text-anchor="middle" font-family="Liberation Serif,serif" letter-spacing="-1.2">LT</text><path d="M0.6 13.6Q2.4 11.6 4.2 13.6T7.8 13.6T11.4 13.6T15 13.6" stroke="#1b9be0" stroke-width="1.7" fill="none"/></svg>
<div class="bm" style="left:1077px">Орфография</div>
<svg class="bmi" style="left:1167px" viewBox="0 0 16 16"><rect width="16" height="16" fill="#f2059f"/><path d="M2.4 6.2H6.4M7.4 6.2H8.6M9.6 6.2H13.4M2.4 7.8H13.4M2.4 9.4H4M5 9.4H6.4M7.4 9.4H8.6M9.6 9.4H11M12 9.4H13.4" stroke="#fbd6ec" stroke-width="1.3"/></svg>
<div class="bm" style="left:1191.5px">Otrografía</div>
<div class="abs" style="left:1279.5px;top:73.5px;font-size:15px;font-weight:bold;color:#3c3f47;line-height:20px">»</div>
<div class="abs" style="left:1298px;top:76px;width:1px;height:16px;background:#c3c9e0"></div>
<svg class="abs" style="left:1309.5px;top:78px" width="15" height="12" viewBox="0 0 16 14"><path d="M1.6 0.6H6L7.6 2.4H14.4A1.2 1.2 0 0 1 15.6 3.6V12.2A1.2 1.2 0 0 1 14.4 13.4H1.6A1.2 1.2 0 0 1 0.4 12.2V1.8A1.2 1.2 0 0 1 1.6 0.6Z" fill="#686b72"/></svg>
<div class="bm" style="left:1333px">Other bookmarks</div>
<div id="chromeline"></div>
</body>
</html>
